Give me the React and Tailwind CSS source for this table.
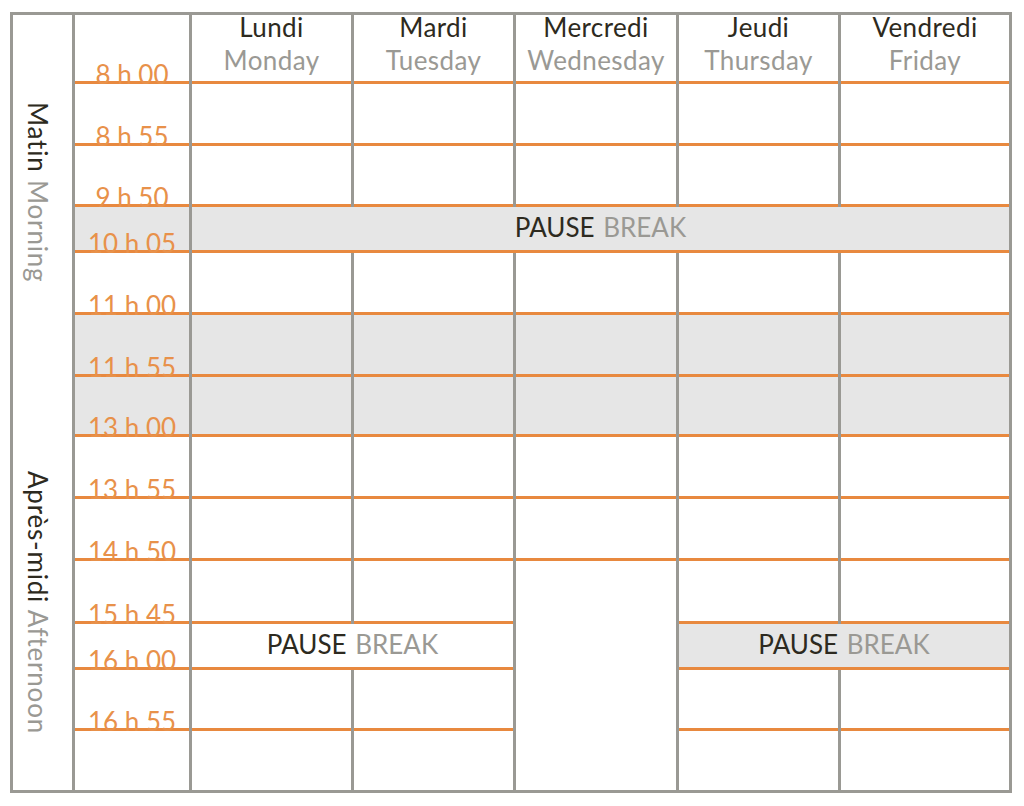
import React from 'react';

const times = [
    '8 h 00', '8 h 55', '9 h 50', '10 h 05', '11 h 00', '11 h 55',
    '13 h 00', '13 h 55', '14 h 50', '15 h 45', '16 h 00', '16 h 55',
];

const days = [
    ['Lundi', 'Monday'],
    ['Mardi', 'Tuesday'],
    ['Mercredi', 'Wednesday'],
    ['Jeudi', 'Thursday'],
    ['Vendredi', 'Friday'],
];

const shadedRows = [3, 5, 6];

function TimeCell({ label, shaded, last }) {
    return (
        <div
            className={`flex items-end justify-center ${shaded ? 'bg-[#e6e6e6]' : 'bg-white'} ${last ? '' : 'border-b-[3px] border-[#e8893f]'}`}
        >
            {label && (
                <span className="mb-[-6px] text-[26px] leading-[26px] text-[#e8914a]">{label}</span>
            )}
        </div>
    );
}

function Cell({ shaded, last }) {
    return (
        <div className={`${shaded ? 'bg-[#e6e6e6]' : 'bg-white'} ${last ? '' : 'border-b-[3px] border-[#e8893f]'}`}></div>
    );
}

function PauseLabel() {
    return (
        <span className="pb-[3px] text-[26px] leading-[26px]">
            <span className="text-[#2d2a20]">PAUSE</span>
            <span className="ml-[2px] text-[#9a9994]"> BREAK</span>
        </span>
    );
}

export default function App() {
    const rows = [];

    for (let i = 0; i < 13; i++) {
        rows.push(
            <TimeCell key={`t${i}`} label={times[i]} shaded={shadedRows.includes(i)} last={i === 12} />
        );

        if (i === 0) {
            days.forEach(([fr, en]) => {
                rows.push(
                    <div key={fr} className="flex flex-col items-center justify-end bg-white pb-[4px] text-[26px] leading-[33px] tracking-[0.4px] border-b-[3px] border-[#e8893f]">
                        <span className="text-[#2d2a20]">{fr}</span>
                        <span className="text-[#9a9994]">{en}</span>
                    </div>
                );
            });
        } else if (i === 3) {
            rows.push(
                <div key="break1" className="col-span-5 flex items-center justify-center bg-[#e6e6e6] border-b-[3px] border-[#e8893f]">
                    <PauseLabel />
                </div>
            );
        } else if (i === 10) {
            rows.push(
                <div key="break2a" className="col-span-2 flex items-center justify-center bg-white border-b-[3px] border-[#e8893f]">
                    <PauseLabel />
                </div>
            );
            rows.push(
                <div key="break2b" className="col-span-2 flex items-center justify-center bg-[#e6e6e6] border-b-[3px] border-[#e8893f]">
                    <PauseLabel />
                </div>
            );
        } else {
            // Wednesday is a single merged cell from row 10 down
            const count = i >= 9 ? 4 : 5;
            for (let d = 0; d < count; d++) {
                rows.push(
                    <Cell key={`c${i}-${d}`} shaded={shadedRows.includes(i)} last={i === 12} />
                );
            }
        }
    }

    return (
        <div className="min-h-screen bg-white font-['Lato',sans-serif]">
            <div className="ml-[10px] mt-[12px] w-[1002px] border-[3px] border-[#9a9994] inline-block align-top">
                <div className="grid grid-cols-[59px_114px_159px_159px_160px_159px_1fr] grid-rows-[69px_62px_61px_46px_62px_62px_60px_62px_62px_63px_46px_61px_59px] gap-x-[3px] bg-[#9a9994]">
                    {/* Morning / afternoon side labels */}
                    <div className="col-start-1 row-start-1 row-span-7 flex justify-center bg-white pt-[87px] pr-[9px]">
                        <span className="[writing-mode:vertical-rl] text-[26px] leading-[26px] tracking-[0.8px]">
                            <span className="text-[#2d2a20]">Matin</span>
                            <span className="text-[#9a9994]"> Morning</span>
                        </span>
                    </div>
                    <div className="col-start-1 row-start-8 row-span-6 flex justify-center bg-white pt-[34px] pr-[9px]">
                        <span className="[writing-mode:vertical-rl] text-[26px] leading-[26px] tracking-[0.8px]">
                            <span className="text-[#2d2a20]">Après-midi</span>
                            <span className="text-[#9a9994]"> Afternoon</span>
                        </span>
                    </div>

                    {/* Wednesday afternoon: no classes after 15 h 45 */}
                    <div className="col-start-5 row-start-10 row-span-4 bg-white"></div>

                    {rows}
                </div>
            </div>
        </div>
    );
}
